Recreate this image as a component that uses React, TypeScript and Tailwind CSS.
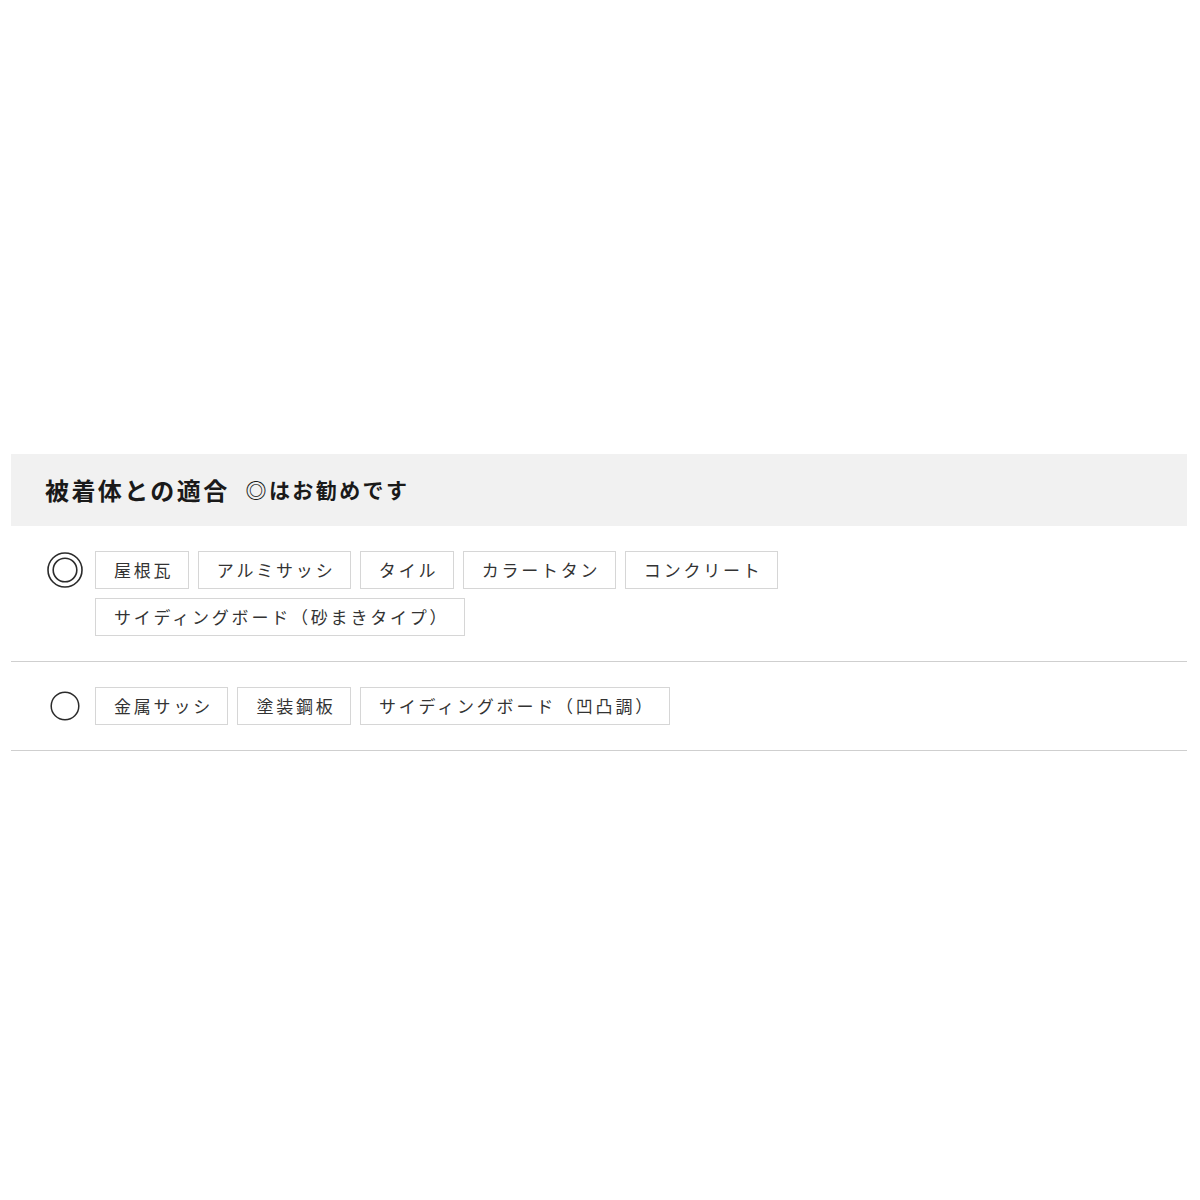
const font = { fontFamily: '"Noto Sans CJK JP", "Noto Sans", sans-serif' };

const recommended = ["屋根瓦", "アルミサッシ", "タイル", "カラートタン", "コンクリート", "サイディングボード（砂まきタイプ）"];
const suitable = ["金属サッシ", "塗装鋼板", "サイディングボード（凹凸調）"];

function DoubleCircle() {
  return (
    <svg width="36" height="36" viewBox="0 0 36 36" fill="none">
      <circle cx="18" cy="18" r="17" stroke="#2b2b2b" strokeWidth="1.6" />
      <circle cx="18" cy="18" r="11.8" stroke="#2b2b2b" strokeWidth="1.6" />
    </svg>
  );
}

function SingleCircle() {
  return (
    <svg width="30" height="30" viewBox="0 0 30 30" fill="none">
      <circle cx="15" cy="15" r="13.8" stroke="#2b2b2b" strokeWidth="1.5" />
    </svg>
  );
}

function Tag({ label }: { label: string }) {
  return (
    <div className="h-[38px] flex items-center pl-[18px] pr-[14.4px] border border-[#d6d6d6] bg-white text-[17px] tracking-[2.8px] text-[#333] whitespace-nowrap">
      {label}
    </div>
  );
}

function Row({ icon, items }: { icon: React.ReactNode; items: string[] }) {
  return (
    <div className="flex py-[25px] border-b border-[#cfcfcf]">
      <div className="w-[36px] h-[38px] ml-[36px] mr-[12px] flex items-center justify-center shrink-0">{icon}</div>
      <div className="w-[760px] flex flex-wrap gap-[9px]">
        {items.map((item) => (
          <Tag key={item} label={item} />
        ))}
      </div>
    </div>
  );
}

export default function App() {
  return (
    <div className="min-h-[1200px] bg-white pt-[454px] px-[11px]" style={font}>
      <div className="w-[1176px]">
        <div className="h-[72px] bg-[#f1f1f1] flex items-center pl-[34px] text-[#1a1a1a] font-bold">
          <span className="text-[24px] tracking-[2.4px]">被着体との適合</span>
          <span className="ml-[16px] text-[21px] tracking-[2.4px]">◎はお勧めです</span>
        </div>
        <Row icon={<DoubleCircle />} items={recommended} />
        <Row icon={<SingleCircle />} items={suitable} />
      </div>
    </div>
  );
}
